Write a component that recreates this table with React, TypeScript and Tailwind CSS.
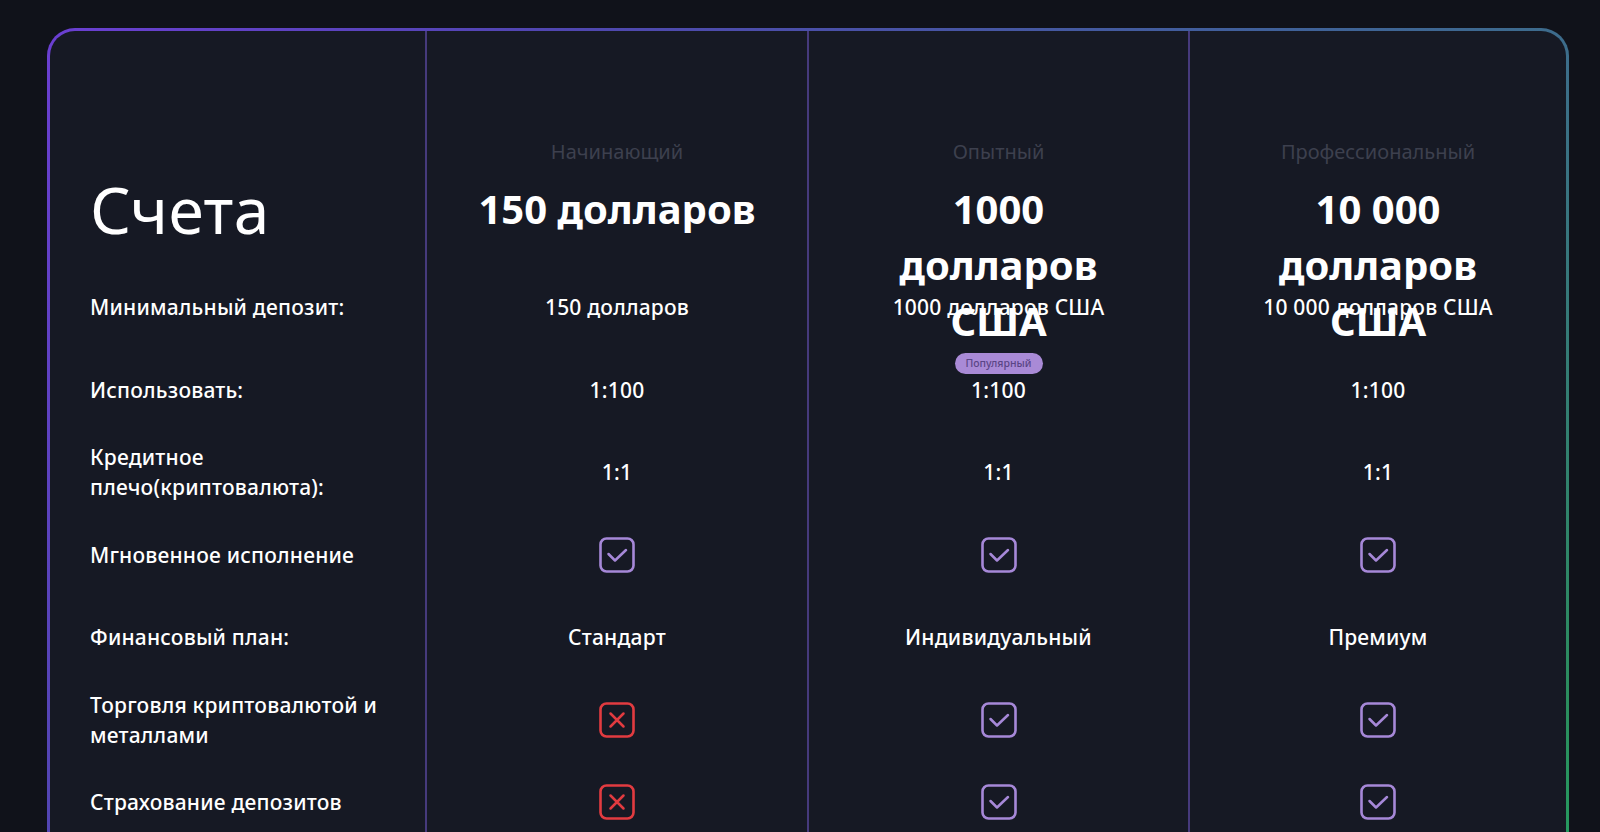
import React from "react";

const FONT = { fontFamily: '"Noto Sans", "Open Sans", sans-serif' };

function Check() {
  return (
    <svg width="36" height="36" viewBox="0 0 36 36" fill="none">
      <rect x="1.5" y="1.5" width="33" height="33" rx="6" stroke="#a688d8" strokeWidth="2.6" />
      <path d="M9.5 17 L16 23.5 L27 13" stroke="#a688d8" strokeWidth="2.5" strokeLinecap="round" strokeLinejoin="round" />
    </svg>
  );
}

function Cross() {
  return (
    <svg width="36" height="36" viewBox="0 0 36 36" fill="none">
      <rect x="1.5" y="1.5" width="33" height="33" rx="6" stroke="#e23b40" strokeWidth="2.6" />
      <path d="M11.5 11.5 L24.5 24.5 M24.5 11.5 L11.5 24.5" stroke="#e23b40" strokeWidth="2.5" strokeLinecap="round" />
    </svg>
  );
}

const labels: React.ReactNode[] = [
  "Минимальный депозит:",
  "Использовать:",
  <>Кредитное<br />плечо(криптовалюта):</>,
  "Мгновенное исполнение",
  "Финансовый план:",
  <>Торговля криптовалютой и<br />металлами</>,
  "Страхование депозитов",
];

type Plan = {
  tier: string;
  price: React.ReactNode;
  badge?: boolean;
  values: React.ReactNode[];
};

const plans: Plan[] = [
  {
    tier: "Начинающий",
    price: "150 долларов",
    values: ["150 долларов", "1:100", "1:1", <Check />, "Стандарт", <Cross />, <Cross />],
  },
  {
    tier: "Опытный",
    price: <>1000<br />долларов<br />США</>,
    badge: true,
    values: ["1000 долларов США", "1:100", "1:1", <Check />, "Индивидуальный", <Check />, <Check />],
  },
  {
    tier: "Профессиональный",
    price: <>10 000<br />долларов<br />США</>,
    values: ["10 000 долларов США", "1:100", "1:1", <Check />, "Премиум", <Check />, <Check />],
  },
];

export default function App() {
  return (
    <div className="h-[832px] overflow-hidden bg-[#10121a] pt-[28px] pl-[47px]" style={FONT}>
      <div className="w-[1522px] rounded-[28px] p-[3px] bg-[linear-gradient(120deg,#6b3fd2_0%,#5046b0_25%,#40609a_60%,#3d6c8c_75%,#2b8d5e_94%,#23a060_100%)]">
        <div className="grid grid-cols-[375px_382px_381px_1fr] rounded-[25px] bg-[#161924] pb-[60px] text-white">
          <div className="flex flex-col">
            <div className="h-[235px] shrink-0 pl-[40px] pt-[151px]">
              <div className="text-[64px] leading-[56px] font-normal tracking-[0.5px]">Счета</div>
            </div>
            {labels.map((l, i) => (
              <div key={i} className="flex h-[82.5px] shrink-0 items-center pl-[40px] pr-[10px] text-[21px] leading-[30px] font-medium tracking-[0.2px]">
                <span>{l}</span>
              </div>
            ))}
          </div>
          {plans.map((p, pi) => (
            <div key={pi} className="flex flex-col border-l-2 border-[#463a7c]">
              <div className="relative z-10 flex h-[235px] shrink-0 flex-col items-center pt-[108px]">
                <div className="shrink-0 text-[20px] leading-[26px] text-[#3d404e]">{p.tier}</div>
                <div className="mt-[16px] shrink-0 text-center text-[40px] font-bold leading-[56px]">{p.price}</div>
                {p.badge && (
                  <div className="mt-[4px] flex h-[21px] w-[88px] shrink-0 items-center justify-center rounded-full bg-[#a98ad6] text-[10.5px] font-medium text-[#5a4586]">
                    Популярный
                  </div>
                )}
              </div>
              {p.values.map((v, i) => (
                <div key={i} className="flex h-[82.5px] shrink-0 items-center justify-center text-[21px] leading-[30px] font-medium tracking-[0.2px]">
                  {v}
                </div>
              ))}
            </div>
          ))}
        </div>
      </div>
    </div>
  );
}
